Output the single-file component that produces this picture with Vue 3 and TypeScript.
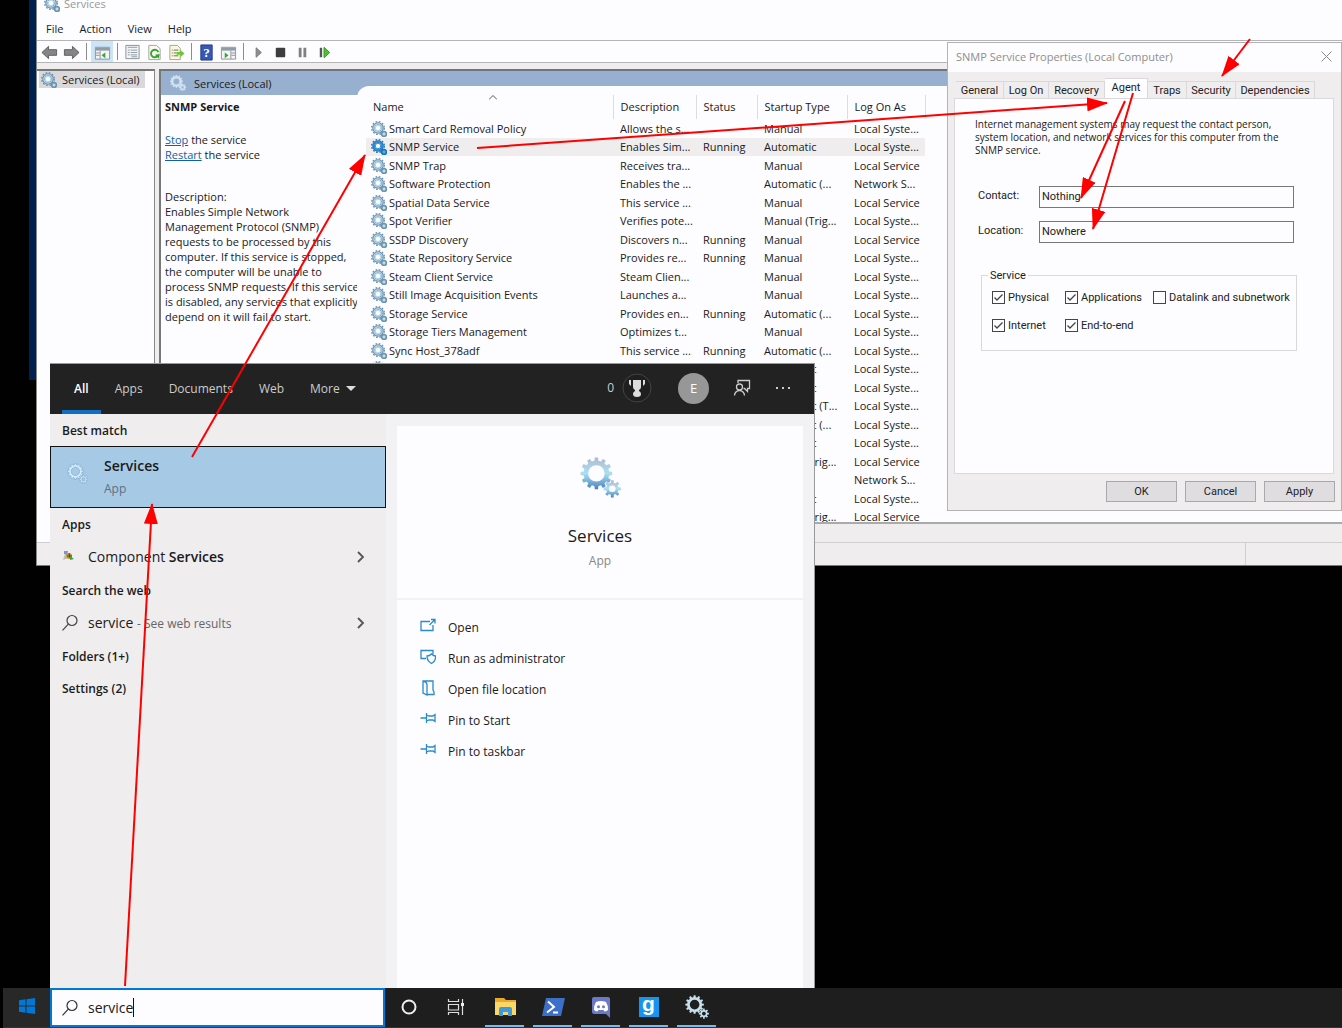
<script setup lang="ts">
import { ref } from 'vue'

interface ServiceRow {
  name: string
  description: string
  status: string
  startup: string
  logon: string
}

function row(name: string, description: string, status: string, startup: string, logon: string): ServiceRow {
  return { name, description, status, startup, logon }
}

const SYSTEM = 'Local Syste...'
const LOCAL = 'Local Service'
const NETWORK = 'Network S...'

const services: ServiceRow[] = [
  row('Smart Card Removal Policy', 'Allows the s...', '', 'Manual', SYSTEM),
  row('SNMP Service', 'Enables Sim...', 'Running', 'Automatic', SYSTEM),
  row('SNMP Trap', 'Receives tra...', '', 'Manual', LOCAL),
  row('Software Protection', 'Enables the ...', '', 'Automatic (...', NETWORK),
  row('Spatial Data Service', 'This service ...', '', 'Manual', LOCAL),
  row('Spot Verifier', 'Verifies pote...', '', 'Manual (Trig...', SYSTEM),
  row('SSDP Discovery', 'Discovers n...', 'Running', 'Manual', LOCAL),
  row('State Repository Service', 'Provides re...', 'Running', 'Manual', SYSTEM),
  row('Steam Client Service', 'Steam Clien...', '', 'Manual', SYSTEM),
  row('Still Image Acquisition Events', 'Launches a...', '', 'Manual', SYSTEM),
  row('Storage Service', 'Provides en...', 'Running', 'Automatic (...', SYSTEM),
  row('Storage Tiers Management', 'Optimizes t...', '', 'Manual', SYSTEM),
  row('Sync Host_378adf', 'This service ...', 'Running', 'Automatic (...', SYSTEM),
  row('', '', '', 'Automatic', SYSTEM),
  row('', '', '', 'Automatic', SYSTEM),
  row('', '', '', 'Automatic (T...', SYSTEM),
  row('', '', '', 'Automatic (...', SYSTEM),
  row('', '', '', 'Automatic', SYSTEM),
  row('', '', '', 'Manual (Trig...', LOCAL),
  row('', '', '', '', NETWORK),
  row('', '', '', 'Automatic', SYSTEM),
  row('', '', '', 'Manual (Trig...', LOCAL),
]

const selected = ref('SNMP Service')
const menus = ['File', 'Action', 'View', 'Help']
const tabs = ['General', 'Log On', 'Recovery', 'Agent', 'Traps', 'Security', 'Dependencies']
const activeTab = ref('Agent')
const contact = ref('Nothing')
const location = ref('Nowhere')
const query = ref('service')

const layers = ref([
  { id: 'physical', label: 'Physical', on: true },
  { id: 'applications', label: 'Applications', on: true },
  { id: 'datalink', label: 'Datalink and subnetwork', on: false },
  { id: 'internet', label: 'Internet', on: true },
  { id: 'end', label: 'End-to-end', on: true },
])

const scopes = ['All', 'Apps', 'Documents', 'Web']
const actions = [
  { label: 'Open', icon: 'open' },
  { label: 'Run as administrator', icon: 'admin' },
  { label: 'Open file location', icon: 'folder' },
  { label: 'Pin to Start', icon: 'pin' },
  { label: 'Pin to taskbar', icon: 'pin' },
]

// Outline of a cog wheel with a round hole, for use with the even-odd rule
function cog(cx: number, cy: number, outer: number, inner: number, hole: number, teeth: number): string {
  const points: string[] = []
  const step = (Math.PI * 2) / teeth
  for (let i = 0; i < teeth; i++) {
    const a = i * step - Math.PI / 2
    const corners: [number, number][] = [[-0.3, inner], [-0.2, outer], [0.2, outer], [0.3, inner]]
    for (const [t, r] of corners) {
      points.push(`${(cx + r * Math.cos(a + t * step)).toFixed(2)} ${(cy + r * Math.sin(a + t * step)).toFixed(2)}`)
    }
  }
  return `M${points.join('L')}ZM${cx - hole} ${cy}a${hole} ${hole} 0 1 0 ${hole * 2} 0a${hole} ${hole} 0 1 0 ${-hole * 2} 0Z`
}
const bigCog = cog(16, 16, 15.5, 12.5, 8, 12)
const smallCog = cog(31.5, 31, 8.5, 6, 3.2, 8)

const arrows = [
  [1250, 39, 1222, 76],
  [477, 148, 1107, 103],
  [1125, 101, 1081, 198],
  [1133, 93, 1093, 229],
  [192, 457, 365, 155],
  [125, 986, 152, 504],
]
</script>

<template>
  <div class="desktop">
    <svg class="defs" aria-hidden="true">
      <defs>
        <linearGradient id="steel" x1="0" y1="0" x2="0" y2="1">
          <stop offset="0" stop-color="#b3b9cf" />
          <stop offset="0.5" stop-color="#a8e0f2" />
          <stop offset="1" stop-color="#4a7fc0" />
        </linearGradient>
        <marker id="head" markerUnits="userSpaceOnUse" markerWidth="22" markerHeight="14" refX="20" refY="7" orient="auto">
          <path d="M0 0L21 7L0 14Z" fill="#f00" />
        </marker>
        <symbol id="gears" viewBox="0 0 40 40">
          <path :d="bigCog" fill-rule="evenodd" />
          <path :d="smallCog" fill-rule="evenodd" />
        </symbol>
        <symbol id="gears-small" viewBox="0 0 16 16">
          <circle cx="7" cy="7" r="6.300" fill="none" stroke="currentColor" stroke-width="1.400" stroke-dasharray="1.700 1.600" />
          <circle cx="7" cy="7" r="4.300" fill="none" stroke="currentColor" stroke-width="3" />
          <circle cx="7" cy="7" r="4.100" fill="none" class="shine" stroke-width="1.200" />
          <circle cx="7" cy="7" r="2.700" fill="#fff" />
          <circle cx="13" cy="13" r="2.300" fill="none" stroke="currentColor" stroke-width="1.800" />
          <path d="M13 9.500V16M9.500 13H16" stroke="currentColor" stroke-width="1" />
          <circle cx="13" cy="13" r="1" fill="#fff" />
        </symbol>
        <symbol id="search" viewBox="0 0 18 18">
          <circle cx="11" cy="6.500" r="5" fill="none" stroke="currentColor" stroke-width="1.200" />
          <path d="M7.300 10.200L1.500 16.300" stroke="currentColor" stroke-width="1.200" />
        </symbol>
      </defs>
    </svg>

    <div class="backdrop"></div>

    <section class="mmc">
      <header class="titlebar">
        <svg class="gear16"><use href="#gears-small" /></svg>
        <span>Services</span>
      </header>
      <nav class="menubar">
        <button v-for="m in menus" :key="m" type="button">{{ m }}</button>
      </nav>
      <div class="toolbar">
        <button type="button" aria-label="Back">
          <svg viewBox="0 0 18 18"><path d="M1 9L8 2.500V6H16.500V12H8V15.500Z" fill="#858585" stroke="#5d5d5d" /></svg>
        </button>
        <button type="button" aria-label="Forward">
          <svg viewBox="0 0 18 18"><path d="M17 9L10 2.500V6H1.500V12H10V15.500Z" fill="#858585" stroke="#5d5d5d" /></svg>
        </button>
        <i></i>
        <button type="button" class="pressed" aria-label="Show or hide console tree">
          <svg viewBox="0 0 18 18"><path d="M1.500 3.500H16.500V16H1.500Z" fill="#f4f4f4" stroke="#8a949e" /><path d="M2 4H16V7H2Z" fill="#8f9ba7" /><path d="M6.500 7V16M2 9.500H6M2 12H6" stroke="#8a949e" /><path d="M8 12L12 9V15Z" fill="#35a52f" /></svg>
        </button>
        <i></i>
        <button type="button" aria-label="Properties">
          <svg viewBox="0 0 18 18"><path d="M2 1.500H16V15.500H2Z" fill="#f5f5f5" stroke="#85909a" /><path d="M4 3.500H14M4 6.500H6M7 6.500H14M4 9H6M7 9H14M4 11.500H6M7 11.500H14M8 13.500H14" stroke="#8c98a5" /></svg>
        </button>
        <button type="button" aria-label="Refresh">
          <svg viewBox="0 0 18 18"><path d="M3 1.500H11L15 5V16.500H3Z" fill="#fafaf2" stroke="#a0a59c" /><path d="M12.500 12.500A4 4 0 1 1 13 8.500" fill="none" stroke="#35a52f" stroke-width="2" /><path d="M9.500 11.500L14.500 10.500L13.500 15.500Z" fill="#35a52f" /></svg>
        </button>
        <button type="button" aria-label="Export list">
          <svg viewBox="0 0 18 18"><path d="M2 1.500H10L13 4.500V16.500H2Z" fill="#faf8dc" stroke="#a9a77e" /><path d="M4 6.500H5M6 6.500H11M4 9.500H5M6 9.500H9M4 12.500H5M6 12.500H11" stroke="#666" /><path d="M9 8.500H13V6L17.500 10L13 14V11.500H9Z" fill="#6cc63c" /></svg>
        </button>
        <i></i>
        <button type="button" aria-label="Help">
          <svg viewBox="0 0 18 18"><path d="M3 1H15V17H3Z" fill="#3558b8" stroke="#223b8a" /><text x="9" y="14" text-anchor="middle" class="qm">?</text></svg>
        </button>
        <button type="button" aria-label="Show or hide action pane">
          <svg viewBox="0 0 18 18"><path d="M1.500 3.500H16.500V16H1.500Z" fill="#f4f4f4" stroke="#8a949e" /><path d="M2 4H16V7H2Z" fill="#8f9ba7" /><path d="M11.500 7V16M12 9.500H16M12 12H16" stroke="#8a949e" /><path d="M9 12L5 9V15Z" fill="#35a52f" /></svg>
        </button>
        <i></i>
        <button type="button" aria-label="Start service">
          <svg viewBox="0 0 18 18"><path d="M6.500 4L12 9L6.500 14Z" fill="#8f8f8f" stroke="#777" /></svg>
        </button>
        <button type="button" aria-label="Stop service">
          <svg viewBox="0 0 18 18"><rect x="4" y="4" width="10" height="10" rx="1" fill="#3d3d3d" /></svg>
        </button>
        <button type="button" aria-label="Pause service">
          <svg viewBox="0 0 18 18"><path d="M5 4H8V14H5ZM10 4H13V14H10Z" fill="#808080" /></svg>
        </button>
        <button type="button" aria-label="Restart service">
          <svg viewBox="0 0 18 18"><path d="M4 4H6.500V14H4Z" fill="#555" /><path d="M8.500 3.500L14.500 9L8.500 14.500Z" fill="#4bc52f" stroke="#2f9c1c" /></svg>
        </button>
      </div>

      <div class="panes">
        <aside class="tree">
          <div class="node"><svg class="gear16"><use href="#gears-small" /></svg><span>Services (Local)</span></div>
        </aside>
        <div class="content">
          <div class="banner">
            <svg class="gear16 pale"><use href="#gears" /></svg><span>Services (Local)</span>
          </div>
          <div class="split">
            <div class="detail">
              <h2>SNMP Service</h2>
              <p><a href="#">Stop</a> the service<br /><a href="#">Restart</a> the service</p>
              <p class="desc">Description:<br />Enables Simple Network<br />Management Protocol (SNMP)<br />requests to be processed by this<br />computer. If this service is stopped,<br />the computer will be unable to<br />process SNMP requests. If this service<br />is disabled, any services that explicitly<br />depend on it will fail to start.</p>
            </div>
            <div class="list">
              <table>
                <colgroup>
                  <col class="c-name" /><col class="c-desc" /><col class="c-status" /><col class="c-start" /><col class="c-log" />
                </colgroup>
                <thead>
                  <tr>
                    <th>Name<svg viewBox="0 0 8 5"><path d="M0 4.500L4 0.500L8 4.500" fill="none" stroke="#555" /></svg></th>
                    <th>Description</th><th>Status</th><th>Startup Type</th><th>Log On As</th>
                  </tr>
                </thead>
                <tbody>
                  <tr v-for="(s, i) in services" :key="i" :class="{ selected: s.name === selected }" @click="selected = s.name">
                    <td><span class="cell"><svg class="gear16"><use href="#gears-small" /></svg>{{ s.name }}</span></td>
                    <td>{{ s.description }}</td>
                    <td>{{ s.status }}</td>
                    <td>{{ s.startup }}</td>
                    <td>{{ s.logon }}</td>
                  </tr>
                </tbody>
              </table>
            </div>
          </div>
        </div>
      </div>
      <footer class="statusbar"><span></span></footer>
    </section>

    <section class="dialog" role="dialog" aria-label="SNMP Service Properties">
      <header>
        <span>SNMP Service Properties (Local Computer)</span>
        <button type="button" aria-label="Close"><svg viewBox="0 0 11 11"><path d="M0.500 0.500L10.500 10.500M10.500 0.500L0.500 10.500" stroke="#888" /></svg></button>
      </header>
      <div class="tabs" role="tablist">
        <button v-for="t in tabs" :key="t" type="button" role="tab" :class="[t.replace(' ', '').toLowerCase(), { active: t === activeTab }]" @click="activeTab = t">{{ t }}</button>
      </div>
      <div class="page">
        <p>Internet management systems may request the contact person,<br />system location, and network services for this computer from the<br />SNMP service.</p>
        <div class="field"><label for="contact">Contact:</label><input id="contact" v-model="contact" type="text" /></div>
        <div class="field"><label for="location">Location:</label><input id="location" v-model="location" type="text" /></div>
        <fieldset>
          <legend>Service</legend>
          <label v-for="l in layers" :key="l.id" :for="l.id"><input :id="l.id" v-model="l.on" type="checkbox" />{{ l.label }}</label>
        </fieldset>
      </div>
      <footer>
        <button type="button">OK</button>
        <button type="button">Cancel</button>
        <button type="button">Apply</button>
      </footer>
    </section>

    <section class="flyout">
      <header>
        <nav>
          <button v-for="s in scopes" :key="s" type="button" :class="{ current: s === 'All' }">{{ s }}</button>
          <button type="button" class="more">More<svg viewBox="0 0 10 5"><path d="M0 0H10L5 5Z" fill="#ddd" /></svg></button>
        </nav>
        <div class="account">
          <span>0</span>
          <svg class="trophy" viewBox="0 0 30 30"><circle cx="15" cy="15" r="14" fill="#1f1f1f" stroke="#444" /><path d="M11 7H19V14Q19 16 17 17V18Q19 19 19 21A4 3 0 0 1 11 21Q11 19 13 18V17Q11 16 11 14ZM7 7H9V13L7 11ZM21 7H23V11L21 13Z" fill="#ddd" /></svg>
          <span class="avatar">E</span>
          <svg class="feedback" viewBox="0 0 18 18"><g fill="none" stroke="#ccc" stroke-width="1.300"><path d="M5 4V1.500H16.500V9.500H14.500V12.500L11.500 9.500H10.500" /><circle cx="6.500" cy="8" r="3" /><path d="M1.500 16.500A5 5 0 0 1 11.500 16.500" /></g></svg>
          <svg class="dots" viewBox="0 0 16 4"><path d="M1 1H3V3H1ZM7 1H9V3H7ZM13 1H15V3H13Z" fill="#ccc" /></svg>
        </div>
      </header>
      <div class="body">
        <div class="results">
          <h3>Best match</h3>
          <button type="button" class="best">
            <svg class="gear20"><use href="#gears" /></svg>
            <span><b>Services</b><small>App</small></span>
          </button>
          <h3>Apps</h3>
          <button type="button" class="hit">
            <svg class="mini" viewBox="0 0 18 18"><path d="M3 3H7L6 7L3 6Z" fill="#7d8fe0" /><path d="M4 6L2 12L7 10Z" fill="#bbb" /><circle cx="8" cy="8" r="3" fill="#c49b2a" /><path d="M6 8H11M8 5L9 10" stroke="#544519" /><path d="M9 8L13 11L9 12Z" fill="#3aa04a" /></svg>
            <span>Component <b>Services</b></span>
            <svg class="chev" viewBox="0 0 8 12"><path d="M1 1L6 6L1 11" fill="none" stroke="#555" stroke-width="1.800" /></svg>
          </button>
          <h3>Search the web</h3>
          <button type="button" class="hit">
            <svg class="mini"><use href="#search" /></svg>
            <span>service <small>- See web results</small></span>
            <svg class="chev" viewBox="0 0 8 12"><path d="M1 1L6 6L1 11" fill="none" stroke="#555" stroke-width="1.800" /></svg>
          </button>
          <h3>Folders (1+)</h3>
          <h3>Settings (2)</h3>
        </div>
        <div class="preview">
          <div class="hero">
            <svg><use href="#gears" /></svg>
            <h1>Services</h1>
            <small>App</small>
          </div>
          <div class="actions">
            <button v-for="a in actions" :key="a.label" type="button">
              <svg viewBox="0 0 16 16" fill="none" stroke="#2b8acb" stroke-width="1.300">
                <path v-if="a.icon === 'open'" d="M10 3.500H1V12.500H13V7M9.500 7L15 1.500M11 1.500H15V5.500" />
                <path v-else-if="a.icon === 'admin'" d="M13 5V1.500H1V9.500H6M7 7Q9.500 7 11.500 5Q13.500 7 15.500 7Q16 12 11.500 14.500Q7 12 7 7Z" />
                <path v-else-if="a.icon === 'folder'" d="M3 1H13V10L14 12V14.500H7M3 1V13L7 15V5Q7 2 3 1Z" />
                <path v-else d="M0.500 7H6M6.500 2V12M6.500 4L9 5H13L15 3.500V10.500L13 9H9L6.500 10" />
              </svg>
              {{ a.label }}
            </button>
          </div>
        </div>
      </div>
    </section>

    <footer class="taskbar">
      <button type="button" class="start" aria-label="Start">
        <svg viewBox="0 0 16 16"><path d="M0 2.300L6.500 1.300V7.500H0ZM7.500 1.200L16 0V7.500H7.500ZM0 8.500H6.500V14.700L0 13.700ZM7.500 8.500H16V16L7.500 14.800Z" fill="#0078d7" /></svg>
      </button>
      <label class="searchbox" for="query">
        <svg><use href="#search" /></svg>
        <input id="query" v-model="query" type="text" aria-label="Search" />
        <i></i>
      </label>
      <button type="button" class="task" aria-label="Cortana"><svg viewBox="0 0 24 24"><circle cx="12" cy="12" r="6.500" fill="none" stroke="#eee" stroke-width="2" /></svg></button>
      <button type="button" class="task" aria-label="Task view"><svg viewBox="0 0 24 24"><path d="M3.500 4V6.500H13.500V4M3.500 9.500H13.500V15H3.500ZM3.500 20V17.500H13.500V20M17.500 4V20" fill="none" stroke="#ddd" stroke-width="1.200" /><path d="M16 8H19V11H16Z" fill="#eee" /></svg></button>
      <button type="button" class="task open" aria-label="File Explorer"><svg viewBox="0 0 24 24"><path d="M2 3H11L13 5H23V20H2Z" fill="#e9a92c" /><path d="M2 7H23V20H2Z" fill="#fbd768" /><path d="M6 14Q6 12 8 12H17Q19 12 19 14V21H15V17H10V21H6Z" fill="#3e9ad8" /></svg></button>
      <button type="button" class="task open" aria-label="PowerShell"><svg viewBox="0 0 24 24"><path d="M5 3H24L20 21H1Z" fill="#3b6fca" /><path d="M7 6.500L13 12L6 17.500M12 17.500H17" fill="none" stroke="#fff" stroke-width="2" /></svg></button>
      <button type="button" class="task open" aria-label="Discord"><svg viewBox="0 0 24 24"><path d="M5 2H19Q21 2 21 4V23L17 19H5Q3 19 3 17V4Q3 2 5 2Z" fill="#6b79c6" /><path d="M7 7Q12 5 17 7Q19.500 11 19 15Q17 16.500 15.500 16.500L14.500 15H9.500L8.500 16.500Q7 16.500 5 15Q4.500 11 7 7Z" fill="#fff" /><circle cx="9.500" cy="11.800" r="1.500" fill="#6b79c6" /><circle cx="14.500" cy="11.800" r="1.500" fill="#6b79c6" /></svg></button>
      <button type="button" class="task open" aria-label="Gyazo"><b>g</b></button>
      <button type="button" class="task open" aria-label="Services"><svg class="gears"><use href="#gears" /></svg></button>
    </footer>

    <svg class="arrows" aria-hidden="true">
      <line v-for="(a, i) in arrows" :key="i" :x1="a[0]" :y1="a[1]" :x2="a[2]" :y2="a[3]" marker-end="url(#head)" />
    </svg>
  </div>
</template>

<style>
body {
  background: #010101;
}
</style>

<style scoped>
* {
  box-sizing: border-box;
}
.desktop {
  position: relative;
  height: 100vh;
  min-height: 800px;
  overflow: hidden;
  background: #010101;
  color: #1a1a1a;
  font: 11px/15px "Open Sans", "Noto Sans", sans-serif;
}
button {
  border: 0;
  padding: 0;
  background: none;
  color: inherit;
  font: inherit;
}
h1,
h2,
h3,
p {
  margin: 0;
}
.defs {
  position: absolute;
  width: 0;
  height: 0;
}
.backdrop {
  position: absolute;
  left: 29px;
  top: 0;
  width: 7px;
  height: 380px;
  background: #00204f;
}
.arrows {
  position: absolute;
  inset: 0;
  width: 100%;
  height: 100%;
  pointer-events: none;
  stroke: #f00;
  stroke-width: 2;
}
.gear16 {
  flex: none;
  width: 16px;
  height: 16px;
  color: #6c93b0;
  stroke: #b9d9ea;
}
.shine {
  stroke: inherit;
}
.pale {
  fill: #d3e4f2;
  stroke: #d3e4f2;
}

/* Services console */
.mmc {
  position: absolute;
  left: 36px;
  right: 0;
  top: 0;
  height: 566px;
  display: flex;
  flex-direction: column;
  background: #fdfcfe;
  border-left: 1px solid #888;
  border-bottom: 1px solid #777;
}
.titlebar {
  display: flex;
  align-items: center;
  gap: 4px;
  height: 19px;
  margin-top: -6px;
  padding: 0 7px;
  color: #999;
}
.menubar {
  display: flex;
  align-items: center;
  gap: 16px;
  height: 27px;
  padding: 4px 9px 0;
}
.toolbar {
  display: flex;
  align-items: center;
  height: 23px;
  padding-left: 1px;
  border-top: 1px solid #b5b5b5;
  border-bottom: 1px solid #b5b5b5;
}
.toolbar button {
  display: flex;
  align-items: center;
  justify-content: center;
  width: 22px;
  height: 21px;
  padding-top: 1px;
}
.toolbar svg {
  width: 17px;
  height: 17px;
}
.toolbar .pressed {
  background: #cce4f7;
}
.toolbar i {
  width: 1px;
  height: 17px;
  margin: 0 4px;
  background: #8c8c8c;
}
.toolbar i ~ i {
  margin: 0 3px 0 4px;
}
.qm {
  font: bold 14px "Liberation Serif", serif;
  fill: #fff;
}
.panes {
  flex: 1;
  display: flex;
  gap: 4px;
  min-height: 0;
  padding-top: 6px;
  background: #efedee;
}
.tree {
  flex: none;
  width: 118px;
  padding: 0 2px;
  background: #fdfcfe;
  border-top: 2px solid #777;
  border-right: 1px solid #888;
}
.node {
  display: flex;
  align-items: center;
  gap: 5px;
  width: 106px;
  height: 17px;
  padding-left: 2px;
  background: #dad8da;
}
.content {
  flex: 1;
  display: flex;
  flex-direction: column;
  min-width: 0;
  margin-bottom: 18px;
  background: #fdfcfe;
  border-top: 2px solid #6d7680;
  border-left: 2px solid #777;
  border-bottom: 2px solid #aaa;
}
.banner {
  display: flex;
  flex: none;
  align-items: center;
  gap: 8px;
  height: 24px;
  padding-left: 9px;
  background: #98b0cf;
}
.split {
  flex: 1;
  display: flex;
  min-height: 0;
}
.detail {
  flex: none;
  width: 196px;
  padding: 4px 0 0 4px;
}
.detail h2 {
  font-size: 11px;
  line-height: 15px;
}
.detail p {
  margin-top: 18px;
  white-space: nowrap;
}
.detail .desc {
  margin-top: 27px;
}
.detail a {
  color: #0f62a8;
}
.list {
  flex: 1;
  min-width: 0;
  margin-top: -9px;
  padding: 9px 0 0 9px;
  overflow: hidden;
  background: #fdfcfe;
  border-top-left-radius: 12px;
}
table {
  table-layout: fixed;
  width: 559px;
  border-collapse: collapse;
}
.c-name {
  width: 247px;
}
.c-desc {
  width: 83px;
}
.c-status {
  width: 61px;
}
.c-start {
  width: 90px;
}
.c-log {
  width: 78px;
}
th {
  position: relative;
  height: 24px;
  padding: 0 0 2px 7px;
  border-right: 1px solid #dedcde;
  font-weight: 400;
  text-align: left;
}
th svg {
  position: absolute;
  left: 50%;
  top: 0;
  width: 8px;
  height: 5px;
}
td {
  height: 18px;
  padding: 0 0 0 7px;
  overflow: hidden;
  line-height: 18px;
  white-space: nowrap;
}
td:first-child {
  padding-left: 5px;
}
tr:nth-child(odd) td {
  height: 19px;
}
.selected td {
  background: #efedee;
}
.selected .gear16 {
  color: #1d74bd;
  stroke: #3f97d6;
}
.cell {
  display: flex;
  align-items: center;
  gap: 2px;
}
.statusbar {
  display: flex;
  justify-content: flex-end;
  height: 23px;
  background: #efedee;
  border-top: 1px solid #d0ced0;
}
.statusbar span {
  width: 97px;
  border-left: 1px solid #d0ced0;
}

/* Properties dialog */
.dialog {
  position: absolute;
  right: 0;
  top: 42px;
  width: 395px;
  display: flex;
  flex-direction: column;
  background: #efedee;
  border: 1px solid #b4b2b4;
  font: 11px/13px Roboto, "Liberation Sans", sans-serif;
  color: #222;
}
.dialog header {
  display: flex;
  align-items: center;
  justify-content: space-between;
  height: 29px;
  padding: 0 9px 2px 8px;
  background: #fdfcfe;
  color: #8e8e8e;
  font: 11px/15px "Open Sans", sans-serif;
}
.dialog header svg {
  display: block;
  width: 11px;
  height: 11px;
}
.tabs {
  display: flex;
  align-items: flex-end;
  height: 26px;
  padding-left: 8px;
}
.tabs button {
  height: 17px;
  border: 1px solid #dad8da;
  border-width: 1px 1px 0 0;
  white-space: nowrap;
}
.tabs .active {
  height: 20px;
  padding-bottom: 3px;
  background: #fdfcfe;
}
.general { width: 48px; }
.logon { width: 45px; }
.recovery { width: 56px; }
.agent { width: 43px; }
.traps { width: 39px; }
.security { width: 49px; }
.dependencies { width: 79px; }
.page {
  height: 376px;
  margin: 0 7px 0 6px;
  padding: 19px 36px 0 20px;
  background: #fdfcfe;
  border: 1px solid #dad8da;
}
.page p {
  margin-bottom: 29px;
  font-family: "Open Sans", sans-serif;
  font-size: 10px;
  white-space: nowrap;
}
.field {
  display: flex;
  align-items: flex-start;
  gap: 12px;
  margin-bottom: 13px;
  padding: 0 3px;
}
.field label {
  width: 49px;
  line-height: 20px;
}
.field input {
  flex: 1;
  min-width: 0;
  height: 22px;
  padding: 0 2px 2px;
  border: 1px solid #777;
  background: #fdfcfe;
  color: #222;
  font: inherit;
}
fieldset {
  display: grid;
  grid-template-columns: 73px 88px auto;
  row-gap: 15px;
  width: 316px;
  height: 82px;
  margin: 26px 0 0 6px;
  padding: 9px 0 0 10px;
  align-content: start;
  border: 1px solid #dad8da;
}
legend {
  margin-left: -4px;
  padding: 0 2px;
}
fieldset label {
  display: flex;
  align-items: center;
  gap: 3px;
  white-space: nowrap;
}
fieldset input {
  appearance: none;
  width: 13px;
  height: 13px;
  margin: 0;
  border: 1px solid #444;
  background: #fdfcfe;
}
fieldset input:checked {
  background: #fdfcfe url("data:image/svg+xml,%3Csvg xmlns='http://www.w3.org/2000/svg' viewBox='0 0 11 11'%3E%3Cpath d='M1.500 5.500L4 8L9.500 2.500' fill='none' stroke='%23444' stroke-width='1.300'/%3E%3C/svg%3E") center / 11px 11px no-repeat;
}
.dialog footer {
  display: flex;
  justify-content: flex-end;
  gap: 8px;
  padding: 7px 6px 8px;
}
.dialog footer button {
  width: 71px;
  height: 21px;
  background: #dfdddf;
  border: 1px solid #aaa8aa;
}

/* Search flyout */
.flyout {
  position: absolute;
  left: 50px;
  top: 363px;
  bottom: 40px;
  width: 765px;
  display: flex;
  flex-direction: column;
  border: 1px solid #999;
  border-left: 0;
  border-bottom: 0;
  background: #f2f1f3;
  font-size: 12px;
  line-height: 16px;
}
.flyout header {
  display: flex;
  flex: none;
  align-items: stretch;
  justify-content: space-between;
  height: 50px;
  padding: 0 23px 0 12px;
  background: #222;
  color: #ccc;
}
.flyout nav {
  display: flex;
}
.flyout nav button {
  padding: 0 12px;
  margin-right: 2px;
  border-bottom: 4px solid transparent;
  border-top: 3px solid transparent;
}
.flyout nav .current {
  border-bottom-color: #0f6fc5;
  color: #fff;
  font-weight: 600;
}
.more {
  display: flex;
  align-items: center;
  gap: 6px;
}
.more svg {
  width: 10px;
  height: 5px;
}
.account {
  display: flex;
  align-items: center;
  padding-bottom: 2px;
}
.account svg {
  flex: none;
}
.trophy {
  width: 30px;
  height: 30px;
  margin: 0 26px 0 8px;
}
.avatar {
  width: 31px;
  height: 31px;
  margin-right: 24px;
  border-radius: 50%;
  background: #979797;
  color: #fff;
  font-size: 13px;
  line-height: 31px;
  text-align: center;
}
.feedback {
  width: 18px;
  height: 18px;
  margin-right: 24px;
}
.dots {
  width: 16px;
  height: 4px;
}
.body {
  flex: 1;
  display: flex;
  min-height: 0;
}
.results {
  flex: none;
  width: 336px;
  margin-right: 11px;
  background: #efedee;
}
h3 {
  height: 32px;
  padding: 2px 0 0 12px;
  font-size: 12px;
  font-weight: 600;
  line-height: 30px;
}
.best {
  display: flex;
  align-items: center;
  gap: 16px;
  width: 100%;
  height: 62px;
  padding: 0 0 0 16px;
  background: #a6cae6;
  border: 1px solid #111;
  text-align: left;
}
.best b {
  display: block;
  margin-bottom: 6px;
  font-size: 14px;
  font-weight: 600;
  line-height: 18px;
}
.best small {
  color: #5f6f7d;
  font-size: 12px;
}
.gear20 {
  width: 21px;
  height: 21px;
  margin-bottom: 8px;
  fill: #d3ebf7;
  stroke: #6f9fc4;
}
.hit {
  display: flex;
  align-items: center;
  width: 100%;
  height: 34px;
  padding: 0 21px 0 11px;
  font-size: 14px;
  line-height: 20px;
}
.hit span {
  margin-left: 9px;
}
.hit b {
  font-weight: 600;
}
.hit small {
  color: #666;
  font-size: 12px;
}
.mini {
  width: 18px;
  height: 18px;
  color: #444;
}
.chev {
  width: 8px;
  height: 12px;
  margin-left: auto;
}
.preview {
  flex: 1;
  display: flex;
  flex-direction: column;
  gap: 2px;
  margin: 12px 11px 0 0;
}
.hero {
  display: flex;
  flex-direction: column;
  align-items: center;
  height: 172px;
  padding-top: 31px;
  background: #fdfcfe;
}
.hero svg {
  width: 41px;
  height: 41px;
  fill: url(#steel);
}
.hero h1 {
  margin: 26px 0 5px;
  font-size: 17px;
  font-weight: 400;
  line-height: 24px;
}
.hero small {
  color: #888;
  font-size: 12px;
}
.actions {
  flex: 1;
  padding: 12px 23px;
  background: #fdfcfe;
}
.actions button {
  display: flex;
  align-items: center;
  gap: 12px;
  height: 31px;
}
.actions svg {
  width: 16px;
  height: 16px;
  margin-bottom: 4px;
}

/* Taskbar */
.taskbar {
  position: absolute;
  left: 3px;
  right: 0;
  bottom: 0;
  display: flex;
  height: 40px;
  background: #1e1e1e;
  border-bottom: 1px solid #2d3440;
}
.start {
  width: 47px;
  background: #282828;
}
.start svg {
  width: 16px;
  height: 16px;
}
.searchbox {
  display: flex;
  align-items: center;
  width: 335px;
  padding-left: 9px;
  background: #fdfcfe;
  border: 2px solid #0078d7;
}
.searchbox svg {
  width: 18px;
  height: 18px;
  margin-right: 9px;
  color: #333;
}
.searchbox input {
  field-sizing: content;
  padding: 0;
  border: 0;
  outline: 0;
  background: none;
  color: #1a1a1a;
  font: 14px/20px "Open Sans", sans-serif;
}
.searchbox i {
  width: 1px;
  height: 19px;
  background: #111;
}
.task {
  display: flex;
  align-items: center;
  justify-content: center;
  width: 39px;
  margin-right: 9px;
  border-bottom: 2px solid transparent;
}
.searchbox + .task {
  margin-left: 4px;
}
.task.open {
  border-color: #76b9ed;
}
.task svg {
  width: 24px;
  height: 24px;
}
.task .gears {
  fill: #c5dfeb;
}
.task b {
  width: 20px;
  height: 20px;
  background: #1694f0;
  color: #fff;
  font: bold 21px/14px "Liberation Sans", sans-serif;
}
</style>
